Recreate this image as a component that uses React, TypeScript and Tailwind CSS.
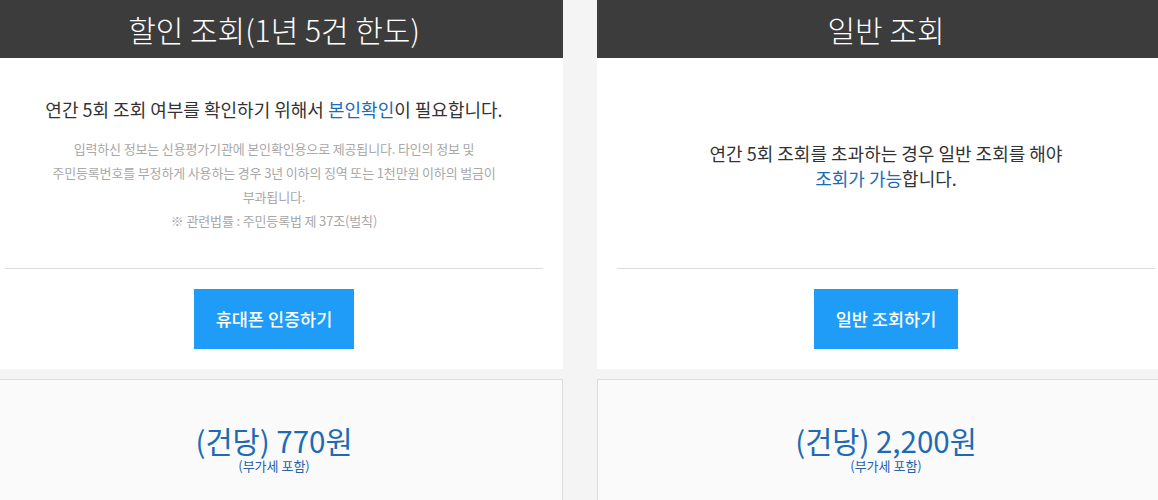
import React from "react";

const font = { fontFamily: '"Noto Sans CJK KR", "Noto Sans", sans-serif' };

function Panel({
  title,
  body,
  button,
  price,
}: {
  title: string;
  body: React.ReactNode;
  button: string;
  price: string;
}) {
  return (
    <div className="flex w-[578px] shrink-0 flex-col">
      <div className="flex h-[58px] items-center justify-center bg-[#3c3c3c]">
        <h2 className="text-[30px] font-light leading-none text-white">{title}</h2>
      </div>
      <div className="bg-white">
        <div className="h-[210px]">{body}</div>
        <div className="mx-[20px] h-px bg-[#dddddd]" />
        <div className="flex justify-center pt-[20px] pb-[20px]">
          <button className="h-[60px] bg-[#1e9cf8] px-[22px] text-[17.5px] font-medium text-white">
            {button}
          </button>
        </div>
      </div>
      <div className="mt-[10px] h-[150px] border border-[#dcdcdc] bg-[#fafafa] pt-[45px] text-center">
        <div className="text-[29.5px] leading-[30px] text-[#1d6bb5]">{price}</div>
        <div className="mt-[3px] text-[13px] leading-[16px] text-[#2a62aa]">(부가세 포함)</div>
      </div>
    </div>
  );
}

export default function App() {
  return (
    <div className="h-[500px] w-full overflow-hidden bg-[#f4f4f4]" style={font}>
      <div className="ml-[-15px] flex w-[1190px] gap-[34px]">
        <Panel
          title="할인 조회(1년 5건 한도)"
          button="휴대폰 인증하기"
          price="(건당) 770원"
          body={
            <div className="pt-[38px] text-center">
              <p className="text-[18px] leading-[27px] text-[#333333]">
                연간 5회 조회 여부를 확인하기 위해서{" "}
                <span className="text-[#1a6cb6]">본인확인</span>이 필요합니다.
              </p>
              <div className="mt-[14px] text-[13px] leading-[24px] tracking-[-0.15px] text-[#a8a8a8]">
                <p>입력하신 정보는 신용평가기관에 본인확인용으로 제공됩니다. 타인의 정보 및</p>
                <p>주민등록번호를 부정하게 사용하는 경우 3년 이하의 징역 또는 1천만원 이하의 벌금이</p>
                <p>부과됩니다.</p>
                <p>※ 관련법률 : 주민등록법 제 37조(벌칙)</p>
              </div>
            </div>
          }
        />
        <Panel
          title="일반 조회"
          button="일반 조회하기"
          price="(건당) 2,200원"
          body={
            <div className="pt-[83px] text-center">
              <p className="text-[18px] leading-[25px] text-[#333333]">
                연간 5회 조회를 초과하는 경우 일반 조회를 해야
                <br />
                <span className="text-[#1a6cb6]">조회가 가능</span>합니다.
              </p>
            </div>
          }
        />
      </div>
    </div>
  );
}
